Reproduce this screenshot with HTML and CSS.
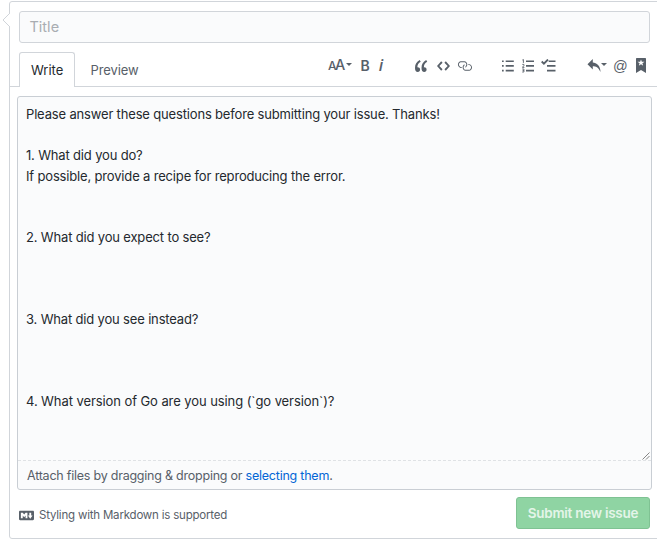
FILE: index.html
```html
<!DOCTYPE html>
<html lang="en">
<head>
<meta charset="utf-8">
<title>New issue</title>
<link rel="stylesheet" href="styles.css">
</head>
<body>
<form class="card">
  <svg class="pointer" viewBox="0 0 8 14"><path d="M8 0L1 7l7 7" fill="#fff" stroke="#d1d5da"/></svg>
  <div class="title">Title</div>
  <div class="head">
    <div class="tab active">Write</div>
    <div class="tab">Preview</div>
    <div class="tools">
      <div class="group g1">
        <span class="size"><small>A</small>A</span><i class="caret"></i>
        <span class="bold">B</span>
        <span class="ital">i</span>
      </div>
      <div class="group g2">
        <svg width="13" height="14" viewBox="0 1 14 14"><path d="M6.16 3.5C3.73 5.06 2.55 6.67 2.55 9.36c.16-.05.3-.05.44-.05 1.27 0 2.5.86 2.5 2.41 0 1.61-1.03 2.61-2.5 2.61-1.9 0-2.99-1.52-2.99-4.25 0-3.8 1.75-6.53 5.02-8.42L6.16 3.5zm7 0c-2.43 1.56-3.61 3.17-3.61 5.86.16-.05.3-.05.44-.05 1.27 0 2.5.86 2.5 2.41 0 1.61-1.03 2.61-2.5 2.61-1.89 0-2.98-1.52-2.98-4.25 0-3.8 1.75-6.53 5.02-8.42l1.14 1.84z"/></svg>
        <svg width="13" height="14" viewBox="0 1 14 14"><path d="M9.5 3L8 4.5 11.5 8 8 11.5 9.5 13 14 8 9.5 3zm-5 0L0 8l4.5 5L6 11.5 2.5 8 6 4.5 4.5 3z"/></svg>
        <svg width="15" height="14" viewBox="0 1 16 14"><path d="M4 9h1v1H4c-1.5 0-3-1.69-3-3.5S2.55 3 4 3h4c1.45 0 3 1.69 3 3.5 0 1.41-.91 2.72-2 3.25V8.59c.58-.45 1-1.27 1-2.09C10 5.22 8.98 4 8 4H4c-.98 0-2 1.22-2 2.5S3 9 4 9zm9-3h-1v1h1c1 0 2 1.22 2 2.5S13.98 12 13 12H9c-.98 0-2-1.22-2-2.5 0-.83.42-1.64 1-2.09V6.25c-1.09.53-2 1.84-2 3.25C6 11.31 7.55 13 9 13h4c1.45 0 3-1.69 3-3.5S14.5 6 13 6z"/></svg>
      </div>
      <div class="group g3">
        <svg width="12" height="14" viewBox="0 0 12 14"><path d="M0 1.4h1.7v1.7H0zm0 4.7h1.7v1.7H0zm0 4.7h1.7v1.7H0zM3.7 1.4h8.1v1.7H3.7zm0 4.7h8.1v1.7H3.7zm0 4.7h8.1v1.7H3.7z"/></svg>
        <svg width="12" height="14" viewBox="0 0 12 14"><path d="M4 1.4h8v1.7H4zm0 4.7h8v1.7H4zm0 4.7h8v1.7H4z"/><path d="M.4 1l1-.5v3.4M.3 5.4h1.6v1.2L.4 8.4H2.4M.2 10h1.7v3H.2m.4-1.5h1.3" fill="none" stroke="#586069" stroke-width=".9"/></svg>
        <svg width="15" height="14" viewBox="0 0 15 14"><path d="M7.7 1.4h6.8v1.7H7.7zM6 6.1h8.5v1.7H6zm0 4.7h8.5v1.7H6z"/><path d="M.7 2.5l2.2 2.2L7 .5" fill="none" stroke="#586069" stroke-width="1.8"/></svg>
      </div>
      <div class="group g4">
        <svg width="14" height="14" viewBox="0 0 14.5 14.5"><path d="M6 3.5c3.92.44 8 3.125 8 10-2.312-5.062-4.75-6-8-6V11L.5 5.5 6 0v3.5z"/></svg><i class="caret"></i>
        <span class="at">@</span>
        <svg class="mark" width="10" height="15" viewBox="0 0 10 16" preserveAspectRatio="none"><path d="M9 0H1C.27 0 0 .27 0 1v15l5-3.09L10 16V1c0-.73-.27-1-1-1zm-.78 4.25L6.36 5.61l.72 2.16c.06.22-.02.28-.2.17L5 6.6 3.12 7.94c-.19.11-.25.05-.2-.17l.72-2.16-1.86-1.36c-.17-.16-.14-.23.09-.23l2.3-.03.7-2.16h.25l.7 2.16 2.3.03c.23 0 .27.08.09.23z"/></svg>
      </div>
    </div>
  </div>
  <div class="editor">
    <div class="text">Please answer these questions before submitting your issue. Thanks!

1. What did you do?
If possible, provide a recipe for reproducing the error.


2. What did you expect to see?



3. What did you see instead?



<span class="last">4. What version of Go are you using (`go version`)?</span></div>
    <svg class="grip" viewBox="0 0 8 8"><path d="M.5 7.5l7-7M4 7.5L7.5 4" fill="none" stroke="#777" stroke-width=".9"/></svg>
    <div class="attach">Attach files by dragging &amp; dropping or <a>selecting them</a>.</div>
  </div>
  <div class="foot">
    <svg width="15" height="15" viewBox="0 0 16 16"><path d="M14.85 3H1.15C.52 3 0 3.52 0 4.15v7.69C0 12.48.52 13 1.15 13h13.69c.64 0 1.15-.52 1.15-1.15v-7.7C16 3.52 15.48 3 14.85 3zM9 11H7V8L5.5 9.92 4 8v3H2V5h2l1.5 2L7 5h2v6zm2.99.5L9.5 8H11V5h2v3h1.5l-2.51 3.5z"/></svg>
    <span class="md">Styling with Markdown is supported</span>
    <div class="submit">Submit new issue</div>
  </div>
</form>
</body>
</html>
```
FILE: styles.css
```css
* { box-sizing: border-box; }
body {
  margin: 0;
  background: #fff;
  overflow: hidden;
  font-family: Inter, "Liberation Sans", sans-serif;
  font-size: 13px;
  color: #24292e;
}
svg { display: block; flex: none; fill: #586069; }
.card {
  position: relative;
  width: 660px;
  height: 538px;
  margin: 1px 0 0 9px;
  border: 1px solid #d1d5da;
  border-radius: 3px;
}
.pointer { position: absolute; left: -8px; top: 11px; width: 8px; height: 14px; }
.title {
  width: 631px;
  height: 32px;
  margin: 9px 0 0 9px;
  padding: 0 9.5px;
  border: 1px solid #d1d5da;
  border-radius: 3px;
  background: #fafbfc;
  color: #a9adb2;
  font-size: 14.5px;
  line-height: 30px;
}
.head {
  display: flex;
  height: 35px;
  margin-top: 9px;
  padding-left: 9px;
  border-bottom: 1px solid #d1d5da;
}
.tab { height: 35px; padding: 0 15.5px; line-height: 36px; color: #586069; letter-spacing: -0.1px; }
.tab.active {
  width: 56px;
  padding: 0 11px;
  border: 1px solid #d1d5da;
  border-bottom: 0;
  border-radius: 3px 3px 0 0;
  background: #fff;
  color: #24292e;
  line-height: 34px;
  letter-spacing: 0;
}
.tools { display: flex; height: 27px; margin-left: auto; margin-right: 22.5px; color: #586069; }
.group { display: flex; align-items: center; }
.g1 { width: 58px; }
.caret { border: 3.5px solid transparent; border-top-color: #586069; border-bottom: 0; margin: -2px 0 0 1px; }
.size { font-size: 14.5px; font-weight: 500; letter-spacing: -1.4px; line-height: 14px; margin-right: 1.4px; }
.size small { font-size: 12px; }
.bold { margin-left: 8px; font-size: 14px; font-weight: 600; }
.ital { margin: -2px 0 0 9px; font: italic 600 16px/16px "Open Sans", sans-serif; }
.g2 { margin-left: 29px; gap: 8px; }
.g2 svg + svg { margin-left: 1px; }
.g2 svg + svg + svg { margin-left: -1px; }
.g3 { margin-left: 30px; gap: 8px; }
.g3 svg:last-child { margin-left: -1px; }
.g4 { margin-left: 31px; }
.g4 .caret { margin-left: 0; }
.at { width: 14px; margin-left: 6px; font: 14.5px/16px "Liberation Sans", sans-serif; }
.mark { margin-left: 8.5px; }
.editor {
  position: relative;
  width: 635px;
  height: 394px;
  margin: 9px 0 0 7px;
  border: 1px solid #c9ced4;
  border-radius: 3px;
  background: #fafbfc;
}
.text { height: 363px; padding: 7px 8px; white-space: pre; line-height: 20.5px; letter-spacing: -0.165px; }
.last { letter-spacing: -0.08px; }
.grip { position: absolute; right: 1px; top: 355px; width: 8px; height: 8px; }
.attach {
  height: 29px;
  padding-left: 9px;
  border-top: 1px dashed #dfe2e5;
  color: #586069;
  font-size: 12.5px;
  letter-spacing: -0.23px;
  line-height: 29px;
}
.attach a { color: #0366d6; }
.foot { display: flex; align-items: center; height: 32px; margin: 7px 18px 0 9px; }
.md { margin: 4px 0 0 5px; color: #586069; font-size: 11.5px; letter-spacing: -0.2px; }
.foot svg { margin-top: 5px; }
.submit {
  width: 134px;
  height: 32px;
  margin-left: auto;
  border: 1px solid #7fc293;
  border-radius: 3px;
  background: #8fd4a3;
  color: #e4f5e9;
  font-size: 13.5px;
  font-weight: 600;
  letter-spacing: -0.27px;
  line-height: 30px;
  text-align: center;
}
```
